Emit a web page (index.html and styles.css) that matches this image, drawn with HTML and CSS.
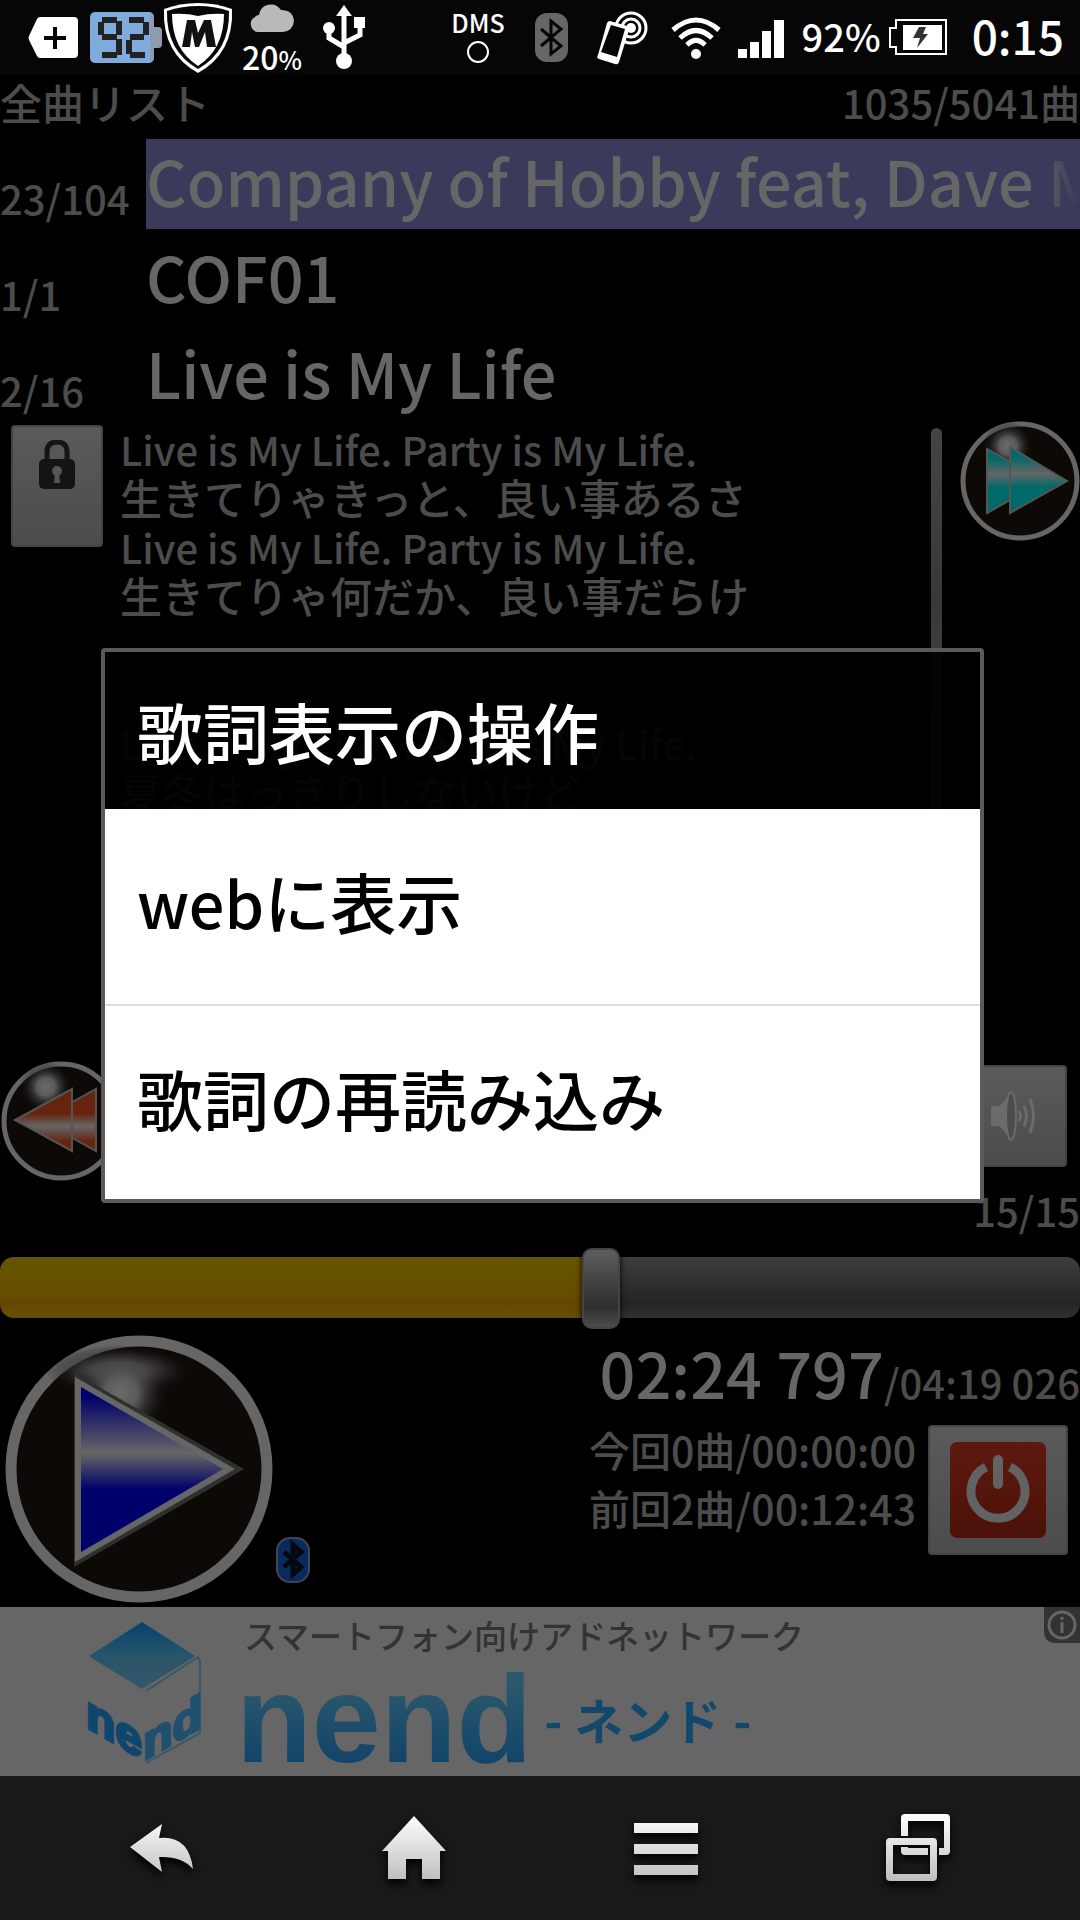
FILE: index.html
```html
<!DOCTYPE html>
<html lang="ja">
<head>
<meta charset="utf-8">
<meta name="viewport" content="width=device-width, initial-scale=1">
<title>Live is My Life</title>
<link rel="stylesheet" href="styles.css">
</head>
<body>
<header class="status">
  <div class="status-group">
    <svg class="ic-tag" width="52" height="44" viewBox="0 0 52 44"><path d="M12 1H46Q50 1 50 5V38Q50 42 46 42H12Q10 42 9 40L1 24Q0 22 1 20L9 3Q10 1 12 1Z" fill="#fff"/><path d="M27 11V33M16 22H38" stroke="#060606" stroke-width="4"/></svg>
    <svg width="72" height="52" viewBox="0 0 72 52"><path d="M60 15H68Q72 15 72 19V32Q72 36 68 36H60Z" fill="#8e9cad"/><rect width="64" height="51" rx="5" fill="#7facdc"/><path d="M60 2H62Q64 3 64 6V45Q64 48 62 49H60Z" fill="#8e9cad"/>
      <g stroke="#222" stroke-width="6" fill="none"><path d="M12 8H27M12 25H27M12 43H27M11 10V23M29 9V23M29 27V43M39 8H54M40 25H54M40 43H55M56 10V23M39 28V42"/></g></svg>
    <svg width="72" height="74" viewBox="0 0 72 74"><path d="M36 2Q54 2 70 8Q72 52 36 72Q0 52 2 8Q18 2 36 2Z" fill="#fff"/><path d="M36 5Q52 5 67 10Q68 50 36 68Q4 50 5 10Q20 5 36 5Z" fill="#060606"/><path d="M10 13Q24 12 36 15Q48 12 62 13Q62 48 36 65Q10 48 10 13Z" fill="#fff"/><path d="M20 46L25 19H33L36 32L42 19H49L54 46H45L43 31L37 46H33L30 31L28 46Z" fill="#111"/></svg>
    <div class="weather">
      <svg width="44" height="30" viewBox="0 0 44 30"><path d="M8 29A8 8 0 0 1 5 14Q6 12 9 12A12 12 0 0 1 31 7Q43 7 44 18Q43 28 33 29Z" fill="#b9b9b9"/></svg>
      <span>20<small>%</small></span>
    </div>
    <svg class="ic-usb" width="42" height="66" viewBox="0 0 42 66"><g fill="#fff"><path d="M21 0L29 11H13Z"/><circle cx="21" cy="56" r="8"/><circle cx="6" cy="23" r="6"/><rect x="31" y="12" width="11" height="11"/></g><path d="M21 8V56M6 25V33L21 42M37 22V30L21 38" fill="none" stroke="#fff" stroke-width="5"/></svg>
  </div>
  <div class="status-group status-right">
    <div class="dms"><span>DMS</span><svg width="24" height="24" viewBox="0 0 24 24"><circle cx="12" cy="12" r="10" fill="none" stroke="#fff" stroke-width="2"/></svg></div>
    <svg class="ic-bt" width="33" height="50" viewBox="0 0 33 50"><rect width="33" height="49" rx="12" fill="#666"/><path d="M6 16L26 33L16 41V8L26 16L6 33" fill="none" stroke="#060606" stroke-width="3"/></svg>
    <svg class="ic-cast" width="52" height="54" viewBox="0 0 52 54"><g fill="none" stroke="#fff" stroke-width="3"><circle cx="34" cy="17" r="15"/><circle cx="34" cy="17" r="9"/></g><circle cx="34" cy="17" r="5" fill="#fff"/><path d="M13 10L30 15Q33 16 32 19L22 51Q21 54 18 53L2 48Q-1 47 1 44L10 12Q11 10 13 10Z" fill="#fff"/><path d="M14 14L28 18L20 46L4 41Z" fill="#060606"/></svg>
    <svg class="ic-wifi" width="52" height="42" viewBox="0 0 52 42"><g fill="none" stroke="#fff" stroke-width="5"><path d="M3 13Q26 -7 49 13M10 21Q26 6 42 21M17 28Q26 19 35 28"/></g><circle cx="26" cy="37" r="5" fill="#fff"/></svg>
    <svg class="ic-signal" width="46" height="40" viewBox="0 0 46 40"><path d="M0 31H9V40H0ZM12 24H21V40H12ZM24 13H33V40H24ZM36 2H46V40H36Z" fill="#fff"/></svg>
    <span class="percent">92%</span>
    <svg class="ic-batt" width="58" height="38" viewBox="0 0 58 38"><path d="M7 1H57V35H7V28H1V9H7Z" fill="none" stroke="#fff" stroke-width="2"/><rect x="14" y="6" width="39" height="25" fill="#fff"/><path d="M30 8H37L34 15H39L28 29L31 19H24Z" fill="#333"/></svg>
    <time class="clock">0:15</time>
  </div>
</header>

<div class="app">
  <div class="list-head"><span>全曲リスト</span><span class="small">1035/5041曲</span></div>
  <div class="tracks">
    <div class="track"><span class="count small">23/104</span><span class="name current">Company of Hobby feat, Dave McKean</span></div>
    <div class="track"><span class="count small">1/1</span><span class="name">COF01</span></div>
    <div class="track"><span class="count small">2/16</span><span class="name">Live is My Life</span></div>
  </div>

  <main class="stage">
    <div class="side">
      <button class="tile lock" aria-label="ロック"><svg width="38" height="50" viewBox="0 0 38 50"><path d="M9 22V12Q9 2 19 2T29 12V22" fill="none" stroke="#141414" stroke-width="5"/><rect x="1" y="19" width="36" height="30" rx="5" fill="#141414"/><circle cx="19" cy="31" r="5" fill="#555"/><path d="M17 32H21L22 43H16Z" fill="#555"/></svg></button>
      <button class="round" aria-label="前の曲"><svg width="120" height="120" viewBox="0 0 120 120">
        <defs><radialGradient id="shine"><stop offset="0" stop-color="#6b6b6b"/><stop offset=".35" stop-color="#5a5a5a"/><stop offset="1" stop-color="#0d0907" stop-opacity="0"/></radialGradient>
        <linearGradient id="red" x1="0" y1="0" x2="0" y2="1"><stop offset="0" stop-color="#66240f"/><stop offset=".4" stop-color="#66240f"/><stop offset=".6" stop-color="#666"/><stop offset=".85" stop-color="#66240f"/></linearGradient>
        <linearGradient id="teal" x1="0" y1="0" x2="0" y2="1"><stop offset=".15" stop-color="#006a68"/><stop offset=".4" stop-color="#666"/><stop offset=".6" stop-color="#006a68"/></linearGradient></defs>
        <circle cx="61" cy="60" r="57" fill="#0d0907" stroke="#666" stroke-width="5"/><circle cx="46" cy="26" r="26" fill="url(#shine)"/>
        <g fill="url(#red)" stroke="#555" stroke-width="2"><path d="M96 28V90L40 59Z"/><path d="M72 28V90L15 59Z"/></g></svg></button>
    </div>
    <div class="lyrics">
      <p><span class="small">Live is My Life. Party is My Life.</span>
生きてりゃきっと、良い事あるさ
<span class="small">Live is My Life. Party is My Life.</span>
生きてりゃ何だか、良い事だらけ


<span class="small">Live is My Life. Party is My Life.</span>
夏冬はっきりしないけど</p>
      <span class="scrollbar"></span>
    </div>
    <div class="side side-right">
      <button class="round" aria-label="次の曲"><svg width="120" height="120" viewBox="0 0 120 120">
        <circle cx="60" cy="60" r="57" fill="#0d0907" stroke="#666" stroke-width="5"/><circle cx="48" cy="25" r="25" fill="url(#shine)"/>
        <g fill="url(#teal)" stroke="#555" stroke-width="2"><path d="M27 28V92L84 60Z"/><path d="M50 26V92L107 60Z"/></g></svg></button>
      <button class="tile volume" aria-label="音量"><svg width="46" height="52" viewBox="0 0 46 52"><path d="M1 16H8Q15 12 20 2V50Q15 40 8 36H1Z" fill="#6b6b6b"/><ellipse cx="21" cy="26" rx="5" ry="24" fill="#4c4c4c" stroke="#6b6b6b" stroke-width="2"/><path d="M29 21Q32 26 29 31M34 16Q39 26 34 36M40 9Q47 26 40 43" fill="none" stroke="#6b6b6b" stroke-width="3"/></svg></button>
    </div>
  </main>

  <div class="queue small">15/15</div>
  <input class="seek" type="range" min="0" max="259026" value="144797" aria-label="再生位置">

  <section class="controls">
    <button class="play" aria-label="再生"><svg width="270" height="270" viewBox="0 0 270 270">
      <defs><linearGradient id="blue" x1="0" y1="0" x2="0" y2="1"><stop offset=".06" stop-color="#00006a"/><stop offset=".4" stop-color="#666"/><stop offset=".62" stop-color="#00006a"/></linearGradient></defs>
      <circle cx="135" cy="134" r="128" fill="#0d0907" stroke="#666" stroke-width="11"/>
      <ellipse cx="115" cy="36" rx="74" ry="26" fill="url(#shine)"/><circle cx="117" cy="58" r="48" fill="url(#shine)"/>
      <path d="M70 38L240 134L70 232Z" fill="#2e302d"/><path d="M71 42L231 134L71 227Z" fill="#666"/><path d="M77 52L219 134L77 217Z" fill="url(#blue)"/></svg></button>
    <svg class="bt-badge" width="34" height="46" viewBox="0 0 34 46"><rect x="1" y="1" width="32" height="44" rx="13" fill="#0b2a5c" stroke="#3c4654" stroke-width="2"/><path d="M8 15L25 30L17 37V8L25 15L8 30" fill="none" stroke="#05080d" stroke-width="5"/></svg>
    <div class="info">
      <div class="time"><strong>02:24 797</strong><span class="small">/04:19 026</span></div>
      <div class="session">
        <div class="totals"><span>今回0曲/00:00:00</span><span>前回2曲/00:12:43</span></div>
        <button class="tile power" aria-label="終了"><svg width="96" height="96" viewBox="0 0 96 96"><defs><linearGradient id="pw" x1="0" y1="0" x2="0" y2="1"><stop offset="0" stop-color="#5e190e"/><stop offset="1" stop-color="#4b1108"/></linearGradient></defs><rect width="96" height="96" rx="7" fill="url(#pw)"/><path d="M36 25A27 27 0 1 0 60 25" fill="none" stroke="#626262" stroke-width="9"/><path d="M48 18V42" stroke="#626262" stroke-width="10" stroke-linecap="round"/></svg></button>
      </div>
    </div>
  </section>

  <a class="ad" href="#">
    <svg class="cube" width="116" height="150" viewBox="0 0 116 150">
      <defs><linearGradient id="top" x1="0" y1="0" x2="0" y2="1"><stop offset="0" stop-color="#07416c"/><stop offset=".5" stop-color="#27566c"/><stop offset="1" stop-color="#46606e"/></linearGradient></defs>
      <path d="M56 1L109 35L56 68L3 35Z" fill="url(#top)"/><path d="M4 36Q56 42 108 36L56 68Z" fill="#2c5268" opacity=".6"/>
      <path d="M60 70L112 36L114 40V112L60 142" fill="none" stroke="#38586a" stroke-width="2"/>
      <g font-family="Liberation Sans, sans-serif" font-weight="bold" font-size="48" stroke-width="3"><text transform="translate(0 106) skewY(30)" fill="#0f466e" stroke="#0f466e">ne</text><text transform="translate(57 140) skewY(-30)" fill="#1f506e" stroke="#1f506e">nd</text></g>
    </svg>
    <span class="ad-text">
      <span class="tagline">スマートフォン向けアドネットワーク</span>
      <span class="brand"><b>nend</b><i>-</i><em>ネンド</em><i>-</i></span>
    </span>
    <svg class="ad-info" width="36" height="36" viewBox="0 0 36 36"><path d="M0 0H36V36H12Q0 36 0 24Z" fill="#333"/><circle cx="18" cy="18" r="13" fill="none" stroke="#666" stroke-width="3"/><path d="M18 15V26M18 10V13" stroke="#666" stroke-width="3"/></svg>
  </a>

  <div class="overlay">
    <div class="dialog" role="dialog" aria-labelledby="dialog-title">
      <h1 id="dialog-title">歌詞表示の操作</h1>
      <button class="option"><span class="latin">web</span>に表示</button>
      <button class="option">歌詞の再読み込み</button>
    </div>
  </div>
</div>

<nav class="navbar">
  <button aria-label="戻る"><svg width="64" height="68" viewBox="0 0 64 68"><defs><linearGradient id="nav" gradientUnits="userSpaceOnUse" x1="0" y1="0" x2="0" y2="68"><stop offset="0" stop-color="#fff"/><stop offset="1" stop-color="#bdbdbd"/></linearGradient></defs><path d="M0 33L32 10L29 24Q59 21 63 55Q52 42 29 43L32 58Z" fill="url(#nav)"/></svg></button>
  <button aria-label="ホーム"><svg width="64" height="68" viewBox="0 0 64 68"><path d="M32 2L64 37H58V65H40V45H24V65H6V37H0Z" fill="url(#nav)"/></svg></button>
  <button aria-label="メニュー"><svg width="64" height="68" viewBox="0 0 64 68"><path d="M0 9H64V19H0ZM0 30H64V40H0ZM0 51H64V61H0Z" fill="url(#nav)"/></svg></button>
  <button aria-label="最近使ったアプリ"><svg width="64" height="68" viewBox="0 0 64 68"><path d="M15 22V4Q15 0 19 0H60Q64 0 64 4V37Q64 41 60 41H53V34H58V7H22V22Z" fill="url(#nav)"/><path fill-rule="evenodd" d="M4 24H47Q51 24 51 28V63Q51 67 47 67H4Q0 67 0 63V28Q0 24 4 24ZM7 31V60H44V31Z" fill="url(#nav)"/><path d="M15 33H22V34H42V41H19Q15 41 15 37Z" fill="url(#nav)"/></svg></button>
</nav>
</body>
</html>
```
FILE: styles.css
```css
* { box-sizing: border-box; }
body {
  margin: 0;
  min-height: 100vh;
  display: flex;
  flex-direction: column;
  background: #000;
  color: #4c4c4c;
  font-family: "Noto Sans CJK JP", "Noto Sans", sans-serif;
  font-size: 42px;
  font-weight: 500;
  line-height: 48px;
}
button { border: 0; padding: 0; margin: 0; background: none; color: inherit; font: inherit; }
svg { display: block; flex: none; }
.small { font-size: 40px; }

/* Status bar */
.status {
  height: 75px;
  padding: 0 16px 0 28px;
  display: flex;
  justify-content: space-between;
  align-items: center;
  background: #060606;
  color: #fff;
}
.status-group { display: flex; align-items: center; }
.ic-tag { margin-right: 10px; }
.weather { width: 60px; margin: 0 21px 0 8px; padding-top: 4px; display: flex; flex-direction: column; align-items: center; gap: 6px; font-size: 32px; line-height: 34px; }
.weather small { font-size: 25px; }
.dms { display: flex; flex-direction: column; align-items: center; gap: 6px; padding-bottom: 2px; font-size: 25px; line-height: 24px; margin-right: 30px; }
.ic-bt { margin-right: 29px; }
.ic-cast { margin-right: 21px; }
.ic-wifi { margin-right: 16px; }
.ic-signal { margin-right: 18px; }
.percent { font-size: 38px; margin-right: 8px; padding-bottom: 4px; }
.ic-batt { margin-right: 25px; }
.clock { font-size: 46px; padding-bottom: 6px; }

/* Track list */
.app { flex: 1; position: relative; display: flex; flex-direction: column; }
.list-head { height: 64px; padding-top: 3px; display: flex; justify-content: space-between; }
.tracks { display: flex; flex-direction: column; gap: 6px; }
.track { height: 90px; display: flex; }
.count { width: 146px; flex: none; padding-top: 35px; }
.name {
  flex: 1;
  min-width: 0;
  padding-bottom: 8px;
  color: #666;
  font-size: 63px;
  line-height: 82px;
  white-space: nowrap;
  overflow: hidden;
}
.current {
  color: transparent;
  background-image: linear-gradient(90deg, #666 95%, transparent), linear-gradient(#3a3a5a, #3a3a5a);
  background-clip: text, border-box;
}

/* Lyrics with side buttons */
.stage { flex: 1; min-height: 0; display: flex; }
.side { width: 120px; flex: none; display: flex; flex-direction: column; justify-content: space-between; }
.side-right { align-items: flex-end; }
.tile {
  display: flex;
  justify-content: center;
  align-items: center;
  border: 2px solid #444;
  border-radius: 4px;
  background: linear-gradient(#5a5a5a, #4c4c4c);
}
.lock { width: 92px; height: 122px; margin: 4px 0 0 11px; align-items: flex-start; padding-top: 13px; }
.volume { width: 124px; height: 102px; margin: 0 13px 14px 0; flex: none; padding-left: 16px; }
.lyrics { flex: 1; min-width: 0; display: flex; justify-content: space-between; padding: 2px 18px 0 0; }
.lyrics p { margin: 0; line-height: 49px; white-space: pre-line; }
.lyrics .small { line-height: 40px; }
.scrollbar { width: 11px; height: 440px; margin-top: 5px; border-radius: 6px; background: linear-gradient(#444, #383838 40%, #555); }

/* Progress */
.queue { height: 64px; text-align: right; padding-top: 5px; }
.seek {
  appearance: none;
  display: block;
  width: 100%;
  height: 84px;
  margin: 0;
  background: none;
}
.seek::-webkit-slider-runnable-track {
  height: 61px;
  border-radius: 14px;
  background:
    linear-gradient(#665600, #664c00 65%, #664600 75%, #665000) 0 0 / 56% 100% no-repeat,
    linear-gradient(#3e3e3e, #242424 75%, #303030);
}
.seek::-webkit-slider-thumb {
  appearance: none;
  width: 38px;
  height: 81px;
  margin-top: -9px;
  border: 2px solid #444;
  border-radius: 10px;
  background: linear-gradient(#5e5e5e, #363636 60%, #303030 75%, #4c4c4c);
  box-shadow: 0 0 6px #000;
}

/* Play controls */
.controls { height: 278px; display: flex; }
.play { padding: 6px 0 0 4px; align-self: flex-start; }
.bt-badge { margin: 208px 0 0 2px; }
.info { flex: 1; }
.time { display: flex; justify-content: flex-end; align-items: baseline; line-height: 85px; }
.time strong { color: #666; font-size: 63px; font-weight: 500; }
.session { display: flex; justify-content: flex-end; gap: 12px; padding-right: 12px; }
.totals { display: flex; flex-direction: column; font-size: 41px; line-height: 58px; margin-top: -5px; }
.power { width: 140px; height: 130px; }

/* Advertisement */
.ad { height: 169px; display: flex; background: #666; padding-left: 86px; color: #333; text-decoration: none; }
.cube { margin: 14px 34px 0 0; }
.ad-text { flex: 1; display: flex; flex-direction: column; }
.tagline { padding-left: 8px; font-size: 33px; line-height: 56px; }
.brand { display: flex; align-items: center; height: 112px; color: #12486c; font-weight: 700; font-size: 49px; }
.brand b {
  font-family: "Liberation Sans", sans-serif;
  font-size: 124px;
  line-height: 112px;
  color: transparent;
  background: linear-gradient(#2a586c 20%, #12446a 90%);
  background-clip: text;
}
.brand i, .brand em { font-style: normal; }
.brand i { padding: 0 12px; }

/* Dialog */
.overlay { position: absolute; inset: 0; display: grid; place-items: center; padding: 0 96px 0 101px; }
.dialog { width: 100%; border: 4px solid #5a5a5a; border-radius: 4px; background: rgba(0, 0, 0, .93); color: #fff; }
.dialog h1 { margin: 0; padding: 0 32px; font-size: 66px; font-weight: 500; line-height: 157px; }
.option {
  display: block;
  width: 100%;
  height: 195px;
  padding: 0 32px 12px;
  text-align: left;
  font-size: 66px;
  line-height: 96px;
  background: #fff;
  color: #000;
}
.option + .option { border-top: 2px solid #ddd; }
.latin { font-size: 63px; }

/* Navigation bar */
.navbar { height: 144px; padding: 0 36px; display: grid; grid-template-columns: repeat(4, 1fr); place-items: center; background: #191919; }
.navbar svg { filter: drop-shadow(0 5px 4px #000); }
```
